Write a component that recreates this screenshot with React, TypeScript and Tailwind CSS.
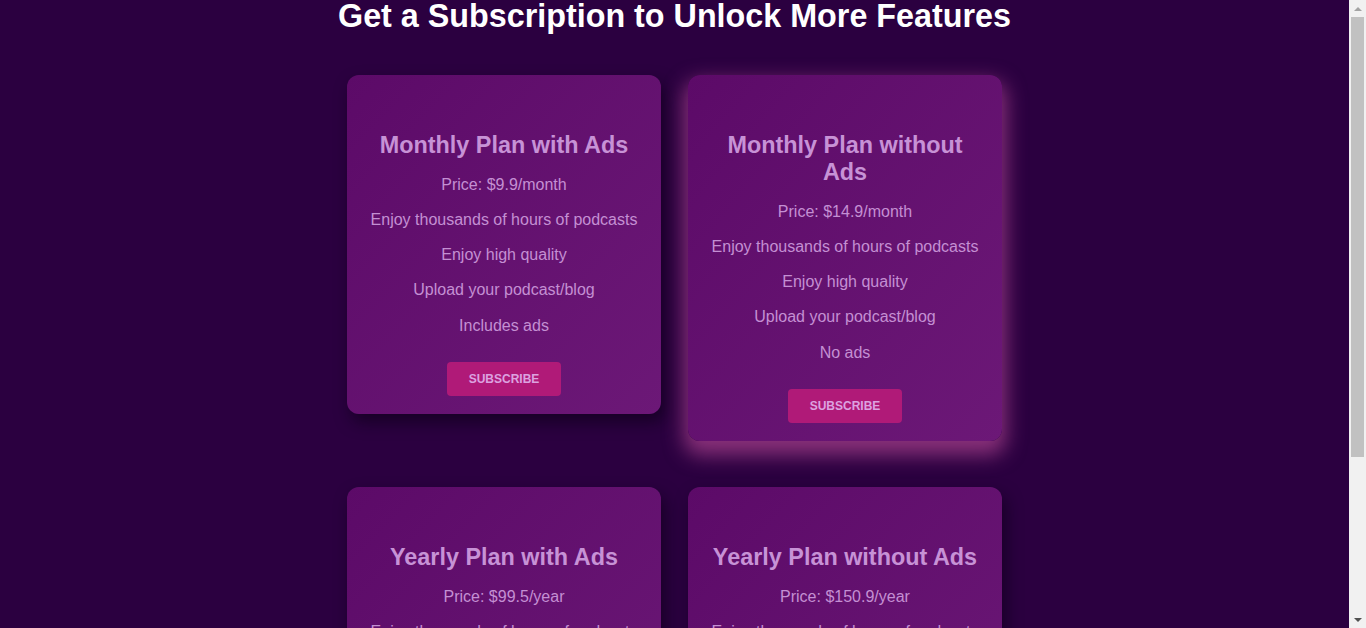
import React from "react";

type Plan = {
    title: string;
    price: string;
    features: string[];
    glow?: boolean;
};

const plans: Plan[] = [
    {
        title: "Monthly Plan with Ads",
        price: "Price: $9.9/month",
        features: ["Enjoy thousands of hours of podcasts", "Enjoy high quality", "Upload your podcast/blog", "Includes ads"],
    },
    {
        title: "Monthly Plan without Ads",
        price: "Price: $14.9/month",
        features: ["Enjoy thousands of hours of podcasts", "Enjoy high quality", "Upload your podcast/blog", "No ads"],
        glow: true,
    },
    {
        title: "Yearly Plan with Ads",
        price: "Price: $99.5/year",
        features: ["Enjoy thousands of hours of podcasts", "Enjoy high quality", "Upload your podcast/blog", "Includes ads"],
    },
    {
        title: "Yearly Plan without Ads",
        price: "Price: $150.9/year",
        features: ["Enjoy thousands of hours of podcasts", "Enjoy high quality", "Upload your podcast/blog", "No ads"],
    },
];

function PlanCard({ plan }: { plan: Plan }) {
    return (
        <div
            className={
                "flex flex-col items-center text-center rounded-xl px-5 pt-[57px] pb-[18px] bg-gradient-to-br from-[#5c0a68] to-[#6c1877] " +
                (plan.glow
                    ? "shadow-[0_10px_20px_4px_rgba(200,80,160,0.6)]"
                    : "shadow-[4px_8px_16px_rgba(10,0,20,0.6)]")
            }
        >
            <h3 className="text-[23.4px] leading-[27px] font-bold text-[#c792d6]">{plan.title}</h3>
            <p className="mt-[15.5px] text-[16px] leading-[19px] text-[#c48fd3]">{plan.price}</p>
            {plan.features.map((f) => (
                <p key={f} className="mt-[16.3px] text-[16px] leading-[19px] text-[#c48fd3]">
                    {f}
                </p>
            ))}
            <button className="mt-[27.5px] h-[34px] w-[114px] rounded bg-[#b01a78] text-[12px] font-bold uppercase text-[#dca2e0]">
                Subscribe
            </button>
        </div>
    );
}

// window scrollbar as it shows in the screenshot
function ScrollBar() {
    return (
        <div className="w-[17px] shrink-0 h-full bg-[#f1f1f1] flex flex-col items-center">
            <div className="h-[17px] flex items-center justify-center">
                <div className="w-0 h-0 border-x-[4px] border-x-transparent border-b-[4px] border-b-[#a3a3a3]" />
            </div>
            <div className="w-[13px] h-[440px] bg-[#c1c1c1]" />
            <div className="flex-1" />
            <div className="h-[17px] flex items-center justify-center">
                <div className="w-0 h-0 border-x-[4px] border-x-transparent border-t-[4px] border-t-[#505050]" />
            </div>
        </div>
    );
}

export default function App() {
    return (
        <div
            className="h-screen flex overflow-hidden bg-[#2b0040]"
            style={{ fontFamily: '"Liberation Sans", Arial, sans-serif' }}
        >
            <div className="flex-1 min-w-0 flex flex-col items-center pb-[22px]">
                <h1 className="text-[32.3px] leading-[32px] font-bold text-white whitespace-nowrap">
                    Get a Subscription to Unlock More Features
                </h1>
                <div className="mt-[43px] grid grid-cols-[314px_314px] gap-x-[27px] gap-y-[46px] items-start">
                    {plans.map((p) => (
                        <PlanCard key={p.title} plan={p} />
                    ))}
                </div>
            </div>
            <ScrollBar />
        </div>
    );
}
